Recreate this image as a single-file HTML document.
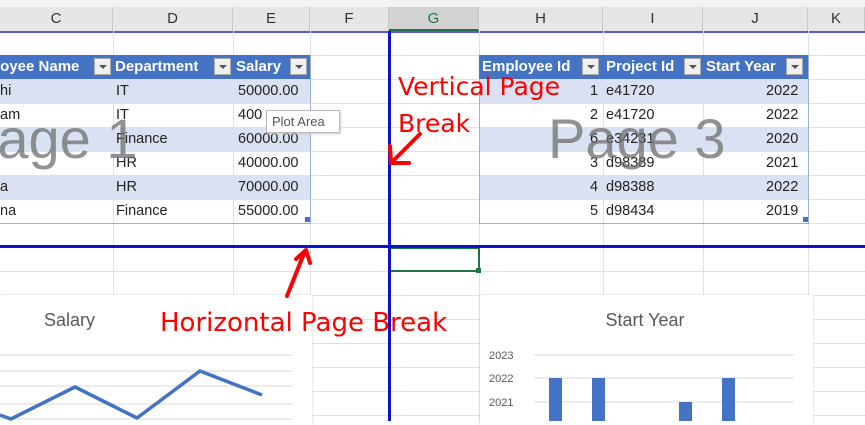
<!DOCTYPE html>
<html><head><style>
*{margin:0;padding:0;box-sizing:border-box}
body{width:865px;height:421px;overflow:hidden;background:#fff;position:relative;font-family:"Liberation Sans",sans-serif;}
.a{position:absolute}
.hd{position:absolute;top:7px;height:24px;background:#e6e6e6;border-right:1px solid #c8c8c8;text-align:center;font-size:15px;line-height:24px;color:#333}
.vl{position:absolute;top:31px;width:1px;height:390px;background:#e1e1e1}
.hl{position:absolute;left:0;width:865px;height:1px;background:#e1e1e1}
.t{position:absolute;height:24px;font-size:14.5px;line-height:24px;color:#222;white-space:nowrap;overflow:hidden}
.th{background:#4472c4;color:#fff;font-weight:bold;font-size:15px}
.band{background:#d9e1f2}
.dd{position:absolute;top:3px;width:17px;height:17px;background:#f0f0f0;border:1px solid #aaa}
.dd:after{content:"";position:absolute;left:4px;top:6px;border-left:4px solid transparent;border-right:4px solid transparent;border-top:4px solid #555}
.red{color:#f00;font-family:"DejaVu Sans","Liberation Sans",sans-serif;}
</style></head><body>
<div class="a" style="left:0;top:0;width:865px;height:7px;background:#f3f3f3"></div>
<div class="hd" style="left:0;width:113px">C</div>
<div class="hd" style="left:113px;width:120px">D</div>
<div class="hd" style="left:233px;width:77px">E</div>
<div class="hd" style="left:310px;width:79px">F</div>
<div class="hd" style="left:389px;width:90px;background:#d2d2d2;color:#217346;border-bottom:2px solid #217346">G</div>
<div class="hd" style="left:479px;width:124px">H</div>
<div class="hd" style="left:603px;width:100px">I</div>
<div class="hd" style="left:703px;width:105px">J</div>
<div class="hd" style="left:808px;width:57px">K</div>
<div class="a" style="left:0;top:31px;width:865px;height:2px;background:#5a5ad8"></div>
<div class="vl" style="left:113px"></div><div class="vl" style="left:233px"></div><div class="vl" style="left:310px"></div>
<div class="vl" style="left:479px"></div><div class="vl" style="left:603px"></div><div class="vl" style="left:703px"></div><div class="vl" style="left:808px"></div>
<div class="hl" style="top:55px"></div><div class="hl" style="top:79px"></div><div class="hl" style="top:103px"></div><div class="hl" style="top:127px"></div><div class="hl" style="top:151px"></div><div class="hl" style="top:175px"></div><div class="hl" style="top:199px"></div><div class="hl" style="top:223px"></div><div class="hl" style="top:271px"></div><div class="hl" style="top:295px"></div><div class="hl" style="top:319px"></div><div class="hl" style="top:343px"></div><div class="hl" style="top:367px"></div><div class="hl" style="top:391px"></div><div class="hl" style="top:415px"></div>
<div class="a band" style="left:0;top:79px;width:310px;height:24px"></div>
<div class="a band" style="left:0;top:127px;width:310px;height:24px"></div>
<div class="a band" style="left:0;top:175px;width:310px;height:24px"></div>
<div class="a" style="left:0;top:55px;width:311px;height:169px;border:1px solid #9bb0dc;border-left:none"></div>
<div class="a" style="left:0;top:55px;width:310px;height:24px;background:#4472c4"></div>
<div class="t th" style="left:0;top:55px;width:113px"><span style="margin-left:-4px">loyee Name</span></div>
<div class="dd" style="left:94px;top:58px"></div>
<div class="t th" style="left:115px;top:55px">Department</div>
<div class="dd" style="left:214px;top:58px"></div>
<div class="t th" style="left:236px;top:55px">Salary</div>
<div class="dd" style="left:290px;top:58px"></div>
<div class="t" style="left:0;top:79px">hi</div><div class="t" style="left:116px;top:79px">IT</div><div class="t" style="left:238px;top:79px">50000.00</div>
<div class="t" style="left:0;top:103px">am</div><div class="t" style="left:116px;top:103px">IT</div><div class="t" style="left:238px;top:103px">400</div>
<div class="t" style="left:116px;top:127px">Finance</div><div class="t" style="left:238px;top:127px">60000.00</div>
<div class="t" style="left:116px;top:151px">HR</div><div class="t" style="left:238px;top:151px">40000.00</div>
<div class="t" style="left:0;top:175px">a</div><div class="t" style="left:116px;top:175px">HR</div><div class="t" style="left:238px;top:175px">70000.00</div>
<div class="t" style="left:0;top:199px">na</div><div class="t" style="left:116px;top:199px">Finance</div><div class="t" style="left:238px;top:199px">55000.00</div>
<div class="a" style="left:305px;top:217px;width:5px;height:5px;background:#4472c4"></div>
<div class="a band" style="left:479px;top:79px;width:329px;height:24px"></div>
<div class="a band" style="left:479px;top:127px;width:329px;height:24px"></div>
<div class="a band" style="left:479px;top:175px;width:329px;height:24px"></div>
<div class="a" style="left:479px;top:55px;width:330px;height:169px;border:1px solid #9bb0dc"></div>
<div class="a" style="left:479px;top:55px;width:329px;height:24px;background:#4472c4"></div>
<div class="t th" style="left:482px;top:55px">Employee Id</div><div class="dd" style="left:582px;top:58px"></div>
<div class="t th" style="left:606px;top:55px">Project Id</div><div class="dd" style="left:684px;top:58px"></div>
<div class="t th" style="left:706px;top:55px">Start Year</div><div class="dd" style="left:786px;top:58px"></div>
<div class="t" style="left:590px;top:79px">1</div><div class="t" style="left:606px;top:79px">e41720</div><div class="t" style="left:766px;top:79px">2022</div>
<div class="t" style="left:590px;top:103px">2</div><div class="t" style="left:606px;top:103px">e41720</div><div class="t" style="left:766px;top:103px">2022</div>
<div class="t" style="left:590px;top:127px">6</div><div class="t" style="left:606px;top:127px">e34231</div><div class="t" style="left:766px;top:127px">2020</div>
<div class="t" style="left:590px;top:151px">3</div><div class="t" style="left:606px;top:151px">d98389</div><div class="t" style="left:766px;top:151px">2021</div>
<div class="t" style="left:590px;top:175px">4</div><div class="t" style="left:606px;top:175px">d98388</div><div class="t" style="left:766px;top:175px">2022</div>
<div class="t" style="left:590px;top:199px">5</div><div class="t" style="left:606px;top:199px">d98434</div><div class="t" style="left:766px;top:199px">2019</div>
<div class="a" style="left:803px;top:217px;width:5px;height:5px;background:#4472c4"></div>
<div class="a" style="left:-40px;top:106px;font-size:56px;line-height:66px;color:rgba(110,110,110,0.75)">Page 1</div>
<div class="a" style="left:548px;top:106px;font-size:56px;line-height:66px;color:rgba(110,110,110,0.75)">Page 3</div>
<div class="a" style="left:266px;top:110px;width:74px;height:23px;background:#fff;border:1px solid #bbb;box-shadow:1px 1px 2px #ccc;font-size:13px;line-height:21px;color:#555;padding-left:5px">Plot Area</div>
<div class="a" style="left:389px;top:247px;width:91px;height:25px;border:2px solid #217346"></div>
<div class="a" style="left:476px;top:268px;width:5px;height:5px;background:#217346"></div>
<div class="a" style="left:0;top:295px;width:312px;height:130px;background:#fff;box-shadow:0 0 2px #ccc"></div>
<div class="a" style="left:44px;top:310px;font-size:18px;color:#595959">Salary</div>
<svg class="a" style="left:0;top:295px" width="312" height="126">
<g stroke="#d9d9d9" stroke-width="1"><line x1="0" y1="60" x2="293" y2="60"/><line x1="0" y1="76" x2="293" y2="76"/><line x1="0" y1="91" x2="293" y2="91"/><line x1="0" y1="109" x2="293" y2="109"/><line x1="0" y1="124" x2="293" y2="124"/></g>
<polyline points="0,120 11,124 75,92 137,123 200,76 262,100" fill="none" stroke="#4472c4" stroke-width="3.5"/>
</svg>
<div class="a" style="left:480px;top:295px;width:333px;height:130px;background:#fff;box-shadow:0 0 2px #ccc"></div>
<div class="a" style="left:480px;top:310px;width:330px;text-align:center;font-size:18px;color:#595959">Start Year</div>
<svg class="a" style="left:480px;top:295px" width="333" height="126">
<g stroke="#d9d9d9"><line x1="54" y1="60" x2="314" y2="60"/><line x1="54" y1="83" x2="314" y2="83"/><line x1="54" y1="107" x2="314" y2="107"/></g>
<g font-family="Liberation Sans" font-size="11" fill="#595959"><text x="9" y="64">2023</text><text x="9" y="87">2022</text><text x="9" y="111">2021</text><text x="9" y="134">2020</text></g>
<g fill="#4472c4"><rect x="69" y="83" width="13" height="45"/><rect x="112" y="83" width="13" height="45"/><rect x="199" y="107" width="13" height="25"/><rect x="242" y="83" width="13" height="45"/></g>
</svg>
<div class="a" style="left:388px;top:31px;width:3px;height:390px;background:#1010d0"></div>
<div class="a" style="left:0;top:245px;width:865px;height:3px;background:#1010d0"></div>
<div class="a red" style="left:398px;top:68px;font-size:25px;line-height:37px">Vertical Page<br>Break</div>
<div class="a red" style="left:160px;top:306px;font-size:26px;line-height:35px;white-space:nowrap">Horizontal Page Break</div>
<svg class="a" style="left:0;top:0" width="865" height="421">
<g stroke="#f00" stroke-width="4" fill="none" stroke-linecap="round" stroke-linejoin="round">
<path d="M420 134 L392 162 M390 146 L391 163 L409 163"/>
<path d="M287 296 L305 251 M296 259 L306 250 L310 263"/>
</g>
</svg>
</body></html>
